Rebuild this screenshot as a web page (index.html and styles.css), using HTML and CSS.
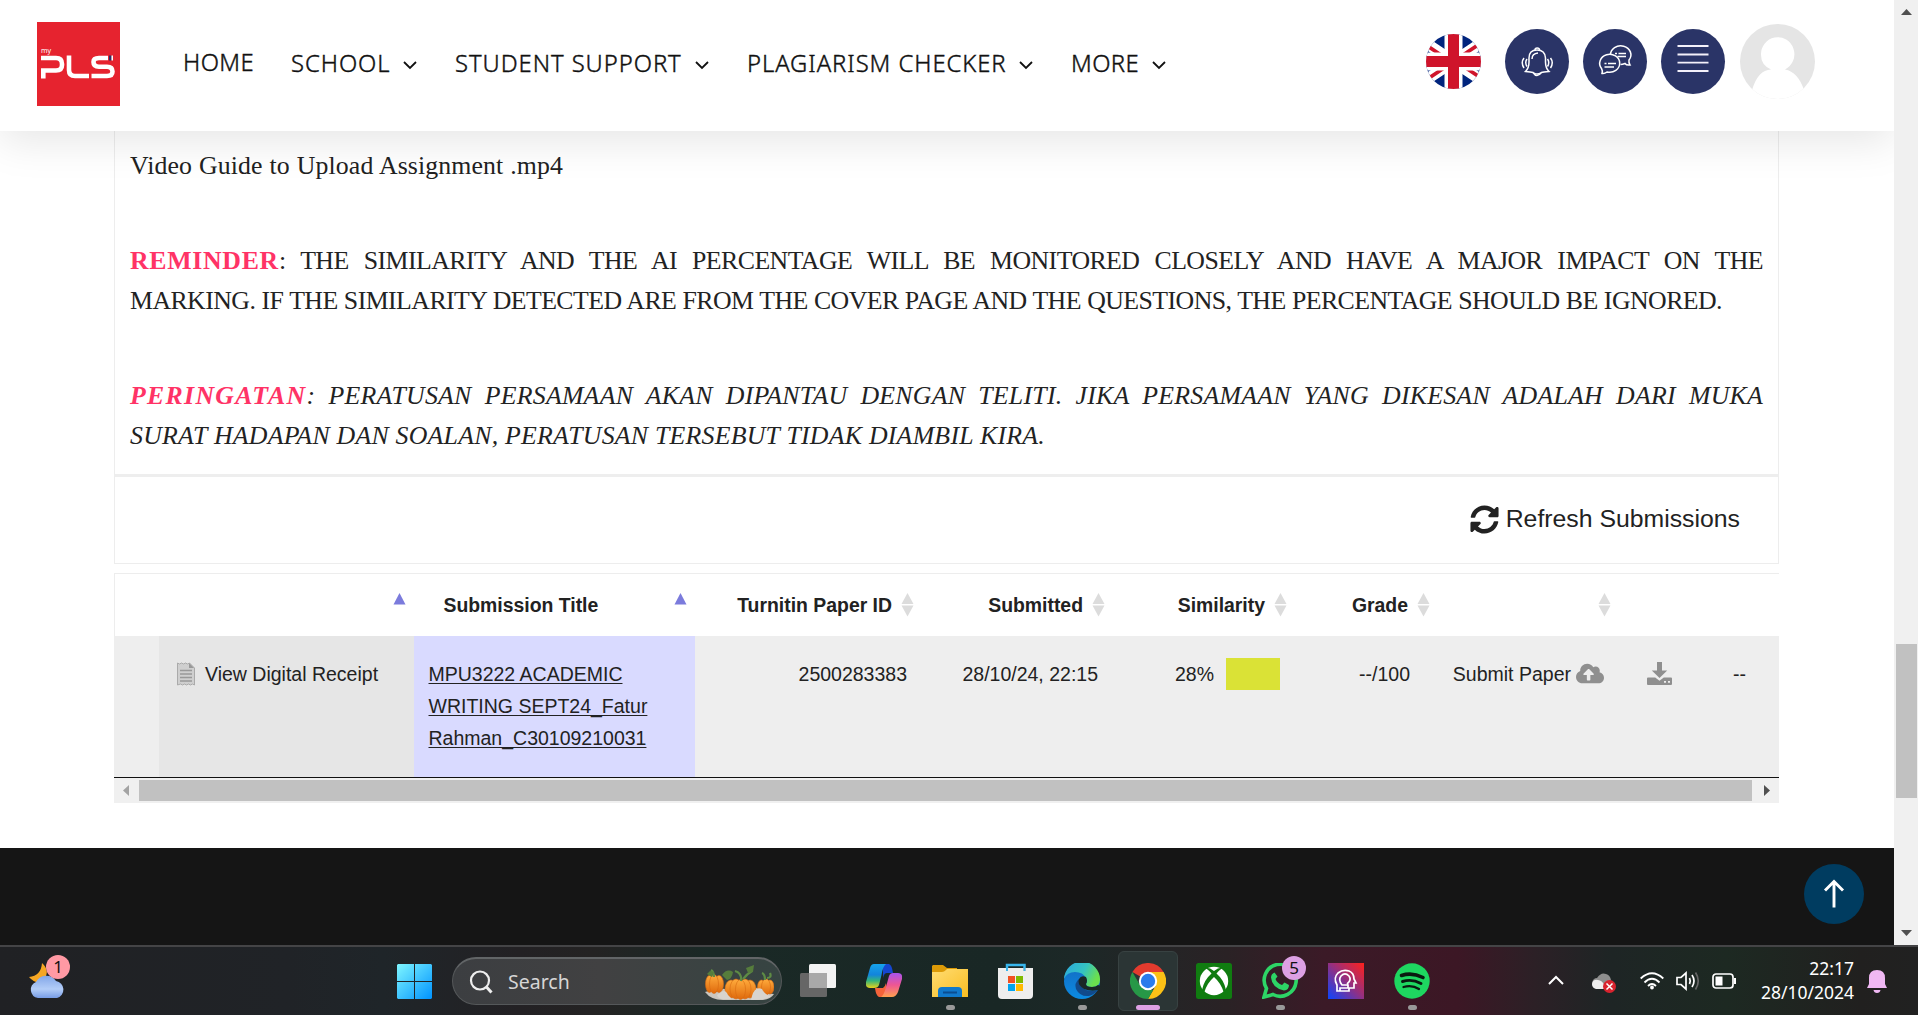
FILE: index.html
```html
<!DOCTYPE html>
<html lang="en">
<head>
<meta charset="utf-8">
<title>myPLS - Submissions</title>
<link rel="stylesheet" href="styles.css">
</head>
<body>
<div class="browser">
  <div class="page">
    <header class="topbar">
      <svg class="logo" width="83" height="84" viewBox="0 0 83 84">
        <rect width="83" height="84" fill="#e6232f"/>
        <text x="4" y="31" class="logo-my">my</text>
        <g fill="none" stroke="#fff" stroke-width="4.6">
          <path d="M4 36H19Q25 36 25 42V43Q25 48.500 19 48.500H6.300V56.500"/>
          <path d="M32 33.500V48Q32 54 38 54H52"/>
          <path d="M71 36H62Q56.500 36 56.500 40Q56.500 44.700 62 44.700H70Q75.500 44.700 75.500 49.500Q75.500 54 70 54H54.500"/>
        </g>
        <path d="M72 33.500h2.500v5H72z" fill="#27306b"/><path d="M74.500 33.500H76v5h-1.500z" fill="#fff"/>
      </svg>
      <nav class="menu">
        <a class="m-home">HOME</a>
        <a class="m-school">SCHOOL<svg width="14" height="9" viewBox="0 0 14 9"><path d="M1 1l6 6 6-6"/></svg></a>
        <a class="m-support">STUDENT SUPPORT<svg width="14" height="9" viewBox="0 0 14 9"><path d="M1 1l6 6 6-6"/></svg></a>
        <a class="m-check">PLAGIARISM CHECKER<svg width="14" height="9" viewBox="0 0 14 9"><path d="M1 1l6 6 6-6"/></svg></a>
        <a class="m-more">MORE<svg width="14" height="9" viewBox="0 0 14 9"><path d="M1 1l6 6 6-6"/></svg></a>
      </nav>
      <div class="actions">
        <svg class="flag" width="55" height="55" viewBox="0 0 55 55">
          <defs><clipPath id="round"><circle cx="27.500" cy="27.500" r="27.500"/></clipPath></defs>
          <g clip-path="url(#round)">
            <rect width="55" height="55" fill="#00247d"/>
            <path d="M-9 3L64 52M64 3L-9 52" stroke="#fff" stroke-width="11"/>
            <path d="M-9 5L27 29M64 3L28 27M-9 52L27 28M64 50L28 26" stroke="#cf142b" stroke-width="3.600"/>
            <path d="M27.500 0V55M0 27.500H55" stroke="#fff" stroke-width="18"/>
            <path d="M27.500 0V55M0 27.500H55" stroke="#cf142b" stroke-width="11"/>
          </g>
        </svg>
        <div class="round"><svg width="64" height="65" viewBox="0 0 64 65"><g fill="none" stroke="#fff" stroke-width="1.500">
          <path d="M20.500 42.500Q24 39 24 33V29Q24 21 32 21T40.500 29V33Q40.500 39 44 42.500Q38 43 36.500 43.500Q34 46.500 32 46.500Q30 46.500 28 43.500Q26 43 20.500 42.500z"/>
          <path d="M30 21Q30 19 32.200 19T34.500 21M27 30Q27 24.500 33 24"/><path d="M29 44Q32 46 36 44"/>
          <path d="M22 30Q19.500 33.500 22 37.500M19 29Q15.500 33.500 19 39M42.500 30Q45 33.500 42.500 37.500M45.500 29Q49 33.500 45.500 39"/></g></svg></div>
        <div class="round"><svg width="64" height="65" viewBox="0 0 64 65"><g fill="none" stroke="#fff" stroke-width="1.500">
          <path d="M19 44.500Q20 42 18.500 39.500A10 9 0 1 1 24 43Q21.500 45 19 44.500z"/>
          <path d="M27.500 26A10.200 9 0 1 1 46 31Q45.500 34 47 36Q43.500 36.500 42 34.500Q39.500 35.500 37.500 35.500"/>
          <path d="M32 24.500H34M35.500 24.500H43M34.500 27.500H43M21.500 34.500H23.500M25 34.500H33M21.500 38H31"/></g></svg></div>
        <div class="round"><svg width="64" height="65" viewBox="0 0 64 65"><path d="M16.500 17H47.500M16.500 25.500H47.500M16.500 33.700H47.500M16.500 42H47.500" stroke="#f3f0fa" stroke-width="1.800"/></svg></div>
        <svg class="avatar" width="75" height="75" viewBox="0 0 75 75"><defs><clipPath id="av"><circle cx="37.500" cy="37.500" r="37.500"/></clipPath></defs>
          <g clip-path="url(#av)"><rect width="75" height="75" fill="#e5e5e5"/><path d="M8 76L12 66Q18 46 31 45.500Q21 41 21 31A16.700 17 0 1 1 45 45.500Q58 48 64 66L68 76z" fill="#fff"/></g></svg>
      </div>
    </header>

    <main class="content">
      <section class="notes">
        <p><span class="line w-video">Video Guide to Upload Assignment .mp4</span></p>
        <p class="reminder"><span class="line"><b>REMINDER</b>: THE SIMILARITY AND THE AI PERCENTAGE WILL BE MONITORED CLOSELY AND HAVE A MAJOR IMPACT ON THE</span>
        <span class="line w-marking">MARKING. IF THE SIMILARITY DETECTED ARE FROM THE COVER PAGE AND THE QUESTIONS, THE PERCENTAGE SHOULD BE IGNORED.</span></p>
        <p class="peringatan"><span class="line"><b>PERINGATAN</b>: PERATUSAN PERSAMAAN AKAN DIPANTAU DENGAN TELITI. JIKA PERSAMAAN YANG DIKESAN ADALAH DARI MUKA</span>
        <span class="line w-surat">SURAT HADAPAN DAN SOALAN, PERATUSAN TERSEBUT TIDAK DIAMBIL KIRA.</span></p>
      </section>
      <section class="refresh">
        <svg width="29" height="29" viewBox="0 0 512 512"><path fill="#222" d="M370.700 133.300C339.500 104 298.900 88 255.800 88c-77.500.1-144.300 53.200-162.800 126.900-1.300 5.400-6.100 9.100-11.700 9.100H24.100c-7.500 0-13.200-6.800-11.800-14.200C33.900 94.900 134.800 8 256 8c66.400 0 126.800 26.100 171.300 68.700L463 41c15.100-15.100 41-4.400 41 17v134c0 13.300-10.700 24-24 24H346c-21.400 0-32.100-25.900-17-41l41.700-41.700zM32 296h134c21.400 0 32.100 25.900 17 41l-41.800 41.800c31.300 29.300 71.800 45.300 115 45.300 77.400-.1 144.300-53.100 162.800-126.900 1.300-5.400 6.100-9.100 11.700-9.100h57.300c7.500 0 13.200 6.800 11.800 14.200C478.100 417.100 377.200 504 256 504c-66.400 0-126.800-26.100-171.300-68.700L49 471c-15.100 15.100-41 4.400-41-17V320c0-13.300 10.700-24 24-24z"/></svg>
        <span>Refresh Submissions</span>
      </section>

      <section class="table">
        <div class="row head">
          <div></div>
          <div class="end p8"><svg class="sort asc" width="13" height="24" viewBox="0 0 13 24"><path d="M6.500 0l6 11.500H.5z"/></svg></div>
          <div class="between"><span>Submission Title</span><svg class="sort asc" width="13" height="24" viewBox="0 0 13 24"><path d="M6.500 0l6 11.500H.5z"/></svg></div>
          <div class="end p8">Turnitin Paper ID<svg class="sort" width="13" height="24" viewBox="0 0 13 24"><path d="M6.500 0l6 11H.5zM.5 12.500h12L6.500 23.500z"/></svg></div>
          <div class="end p8">Submitted<svg class="sort" width="13" height="24" viewBox="0 0 13 24"><path d="M6.500 0l6 11H.5zM.5 12.500h12L6.500 23.500z"/></svg></div>
          <div class="end p8">Similarity<svg class="sort" width="13" height="24" viewBox="0 0 13 24"><path d="M6.500 0l6 11H.5zM.5 12.500h12L6.500 23.500z"/></svg></div>
          <div class="end p8">Grade<svg class="sort" width="13" height="24" viewBox="0 0 13 24"><path d="M6.500 0l6 11H.5zM.5 12.500h12L6.500 23.500z"/></svg></div>
          <div class="end p8"><svg class="sort" width="13" height="24" viewBox="0 0 13 24"><path d="M6.500 0l6 11H.5zM.5 12.500h12L6.500 23.500z"/></svg></div>
          <div></div><div></div>
        </div>
        <div class="row data">
          <div></div>
          <div class="receipt"><svg width="18" height="24" viewBox="0 0 18 24"><path d="M.5 1l2 1 2-1 2 1 2-1 2 1 2-1 5 5V23l-2-1-2 1-2-1-2 1-2-1-2 1-2-1-3 1z" fill="#cfcfcf" stroke="#aaa"/><path d="M12 1v5h5z" fill="#999"/><path d="M3 8.500H15M3 12H15M3 15.500H15M3 19H15" stroke="#999" stroke-width="1.400"/></svg><span>View Digital Receipt</span></div>
          <div class="title"><a>MPU3222 ACADEMIC<br>WRITING SEPT24_Fatur<br>Rahman_C30109210031</a></div>
          <div class="end p15">2500283383</div>
          <div class="end p15">28/10/24, 22:15</div>
          <div class="end p15">28%<i class="swatch"></i></div>
          <div class="end p28">--/100</div>
          <div class="end p15">Submit Paper<svg class="cloud" width="28" height="21" viewBox="0 32 640 448"><path fill="#8f8f8f" fill-rule="evenodd" d="M537.600 226.600c4.100-10.700 6.400-22.400 6.400-34.600 0-53-43-96-96-96-19.700 0-38.100 6-53.300 16.200C367 64.200 315.300 32 256 32c-88.400 0-160 71.600-160 160 0 2.700.1 5.400.2 8.100C40.200 219.800 0 273.200 0 336c0 79.500 64.500 144 144 144h368c70.700 0 128-57.300 128-128 0-61.900-44-113.600-102.400-125.400zM393.400 288H328v112c0 8.800-7.200 16-16 16h-48c-8.800 0-16-7.200-16-16V288h-65.400c-14.300 0-21.400-17.200-11.300-27.300l105.400-105.400c6.200-6.200 16.400-6.200 22.600 0l105.400 105.400c10.100 10.100 2.900 27.300-11.300 27.300z"/></svg></div>
          <div class="end p28"><svg class="dl" width="25" height="23" viewBox="0 0 25 23"><path fill="#8f8f8f" d="M10 0h5v8.500h5.200L12.500 16 4.800 8.500H10z"/><path fill="#8f8f8f" fill-rule="evenodd" d="M1 15.500h7.200l4.300 3.300 4.300-3.300H24q1 0 1 1V22q0 1-1 1H1q-1 0-1-1v-5.500q0-1 1-1zM17 19v1.800h2V19zM21 19v1.800h2V19z"/></svg></div>
          <div class="end p33">--</div>
        </div>
        <div class="hscroll"><svg width="25" height="25" viewBox="0 0 25 25"><path d="M15 7v11l-6-5.500z" fill="#a3a3a3"/></svg><div class="thumb"></div><svg width="27" height="25" viewBox="0 0 27 25"><path d="M12 7v11l6-5.500z" fill="#505050"/></svg></div>
      </section>
    </main>
    <footer class="footer"><div class="totop"><svg width="60" height="60" viewBox="0 0 60 60"><path d="M30 43.500V18M21 26.500l9-9 9 9" fill="none" stroke="#fff" stroke-width="2.900"/></svg></div></footer>
  </div>
  <div class="vscroll"><svg width="24" height="24" viewBox="0 0 24 24"><path d="M7 15h11l-5.500-6z" fill="#505050"/></svg><div class="thumb"></div><svg width="24" height="24" viewBox="0 0 24 24"><path d="M7 9h11l-5.500 6z" fill="#505050"/></svg></div>
</div>

<div class="taskbar">
  <div class="weather"><svg width="37" height="36" viewBox="0 0 37 36"><defs><linearGradient id="cl" x2="0" y2="1"><stop offset="0" stop-color="#82a6e8"/><stop offset=".6" stop-color="#b3cdf8"/><stop offset="1" stop-color="#779ce6"/></linearGradient></defs><path d="M13 0Q22 8 14 18Q7 22 0 14Q12 13 13 0z" fill="#f5a623"/><path d="M9 35A9 8.500 0 0 1 7 19A11.500 11.500 0 0 1 27 18A8.700 8.700 0 0 1 28 35z" fill="url(#cl)"/></svg><span class="badge pink">1</span></div>
  <div class="apps">
    <svg class="win" width="35" height="35" viewBox="0 0 35 35"><defs><linearGradient id="wg" x2="1" y2="1"><stop offset="0" stop-color="#7ff6ff"/><stop offset="1" stop-color="#0093ff"/></linearGradient></defs><path d="M1 0H17V17H0V1zM18 0H34L35 1V17H18zM0 18H17V35H1L0 34zM18 18H35V34L34 35H18z" fill="url(#wg)"/></svg>
    <div class="search"><svg width="24" height="24" viewBox="0 0 24 24" fill="none" stroke="#eee" stroke-width="2.200"><circle cx="11" cy="10.500" r="9"/><path d="M17.500 17l5 5.500" stroke-width="3"/></svg><span>Search</span>
      <svg class="pumpkins" width="69" height="36" viewBox="0 0 69 36"><defs><linearGradient id="pk" x2="0" y2="1"><stop offset="0" stop-color="#ffac3d"/><stop offset="1" stop-color="#df690c"/></linearGradient></defs>
        <path d="M0 27Q8 24 11 27Q20 20 24 28Q40 33 48 24Q56 20 60 28L69 29Q66 34 58 35H18Q6 35 0 27z" fill="#cbc6bf"/>
        <g fill="url(#pk)" stroke="#d66a10" stroke-width=".6"><ellipse cx="4.500" cy="19" rx="4" ry="8.500"/><ellipse cx="14" cy="19" rx="4.500" ry="8.500"/><ellipse cx="9" cy="19" rx="4.500" ry="9.500"/><ellipse cx="56.500" cy="22" rx="4" ry="7"/><ellipse cx="65" cy="22" rx="4" ry="7"/><ellipse cx="61" cy="22" rx="4.500" ry="8"/><ellipse cx="26" cy="24" rx="6" ry="9"/><ellipse cx="45" cy="24" rx="6" ry="9"/><ellipse cx="31" cy="24" rx="6" ry="10"/><ellipse cx="40" cy="24" rx="6" ry="10"/><ellipse cx="35.500" cy="24.500" rx="5" ry="10"/></g>
        <path d="M15 28Q20 23 23 30L27 34H18Q13 34 12 30zM47 31Q50 21 57 24Q60 30 66 31Q62 35 46 35z" fill="#d8d4ce"/>
        <g fill="none" stroke="#5e8b45" stroke-width="2.200"><path d="M36 16Q37 8 30 6M38 14Q42 9 47 6M9 12Q9 7 6 5M60 15Q60 9 57 8M62 13Q67 13 65 8"/></g><path d="M17 10Q22 3 28 7Q27 14 22 15zM41 3l8-3-1 7-5 1zM2 9l3-3 4 1-2 5z" fill="#567d3c"/></svg></div>
    <div class="app"><svg width="36" height="36" viewBox="0 0 36 36"><rect y="10" width="27" height="24" rx="1.500" fill="#666"/><rect x="9" y="1" width="27" height="24" rx="1.500" fill="#f3f3f3"/><path d="M9 10h18v15H9z" fill="#a9a9a9"/></svg></div>
    <div class="app"><svg width="36" height="36" viewBox="0 0 36 36"><defs><linearGradient id="c1" x2="0" y2="1"><stop offset="0" stop-color="#16a4ec"/><stop offset=".45" stop-color="#1284dc"/><stop offset=".7" stop-color="#35b57a"/><stop offset="1" stop-color="#e9d31a"/></linearGradient><linearGradient id="c2" x2="0" y2="1"><stop offset="0" stop-color="#a953ef"/><stop offset=".5" stop-color="#ee5693"/><stop offset="1" stop-color="#ffa04f"/></linearGradient></defs><path d="M17 1H23Q26 2 27 10H21Q18 10 17 15z" fill="#1546cf"/><path d="M9 25h8q2-1 3-5l1 8-4 6h-4q-3-1-4-9z" fill="#f4633a"/><path d="M8 1H20Q17 3 15.500 12L13 22Q12 25 8 25H4Q-1 25 0 19L4 5Q5 1 8 1z" fill="url(#c1)"/><path d="M27 10H32Q37 10 36 16L32 29Q30 34 26 34H15Q18 32 20 24L23 13Q24 10 27 10z" fill="url(#c2)"/></svg></div>
    <div class="app"><svg width="36" height="36" viewBox="0 0 36 36"><defs><linearGradient id="fo" x2="1" y2="1"><stop offset="0" stop-color="#ffdc72"/><stop offset="1" stop-color="#f9bd22"/></linearGradient></defs><path d="M1 2H11L15 5H25V14H0V3z" fill="#dc9a07"/><path d="M0 9H10Q12 9 14 7L15 6H36V34H0z" fill="url(#fo)"/><path d="M6 34V28Q6 24 10 24H26Q30 24 30 28V34z" fill="#1179cb"/><path d="M11 29.500H25" stroke="#0a4d90" stroke-width="2"/></svg><u></u></div>
    <div class="app"><svg width="36" height="36" viewBox="0 0 36 36"><path d="M9 8V2H26.500V8" fill="none" stroke="#38b6ed" stroke-width="2.500"/><path d="M0 5H8V8H10V5H25.500V8H27.500V5H35V32Q35 36 31 36H4Q0 36 0 32z" fill="#eee"/><path d="M10 13h7v7h-7z" fill="#f25022"/><path d="M18 13h7v7h-7z" fill="#7fba00"/><path d="M10 21h7v7h-7z" fill="#00a4ef"/><path d="M18 21h7v7h-7z" fill="#ffb900"/></svg></div>
    <div class="app"><svg width="36" height="36" viewBox="0 0 36 36"><defs><linearGradient id="e1" x2="1" y2=".4"><stop offset="0" stop-color="#2aa7e0"/><stop offset=".6" stop-color="#35c3c0"/><stop offset="1" stop-color="#6be04e"/></linearGradient><linearGradient id="e2" x2="0" y2="1"><stop offset="0" stop-color="#146ac0"/><stop offset="1" stop-color="#0b8be2"/></linearGradient></defs><circle cx="18" cy="18" r="18" fill="url(#e2)"/><path d="M0 16A18 18 0 0 1 36 17Q36 24 28 24Q22 24 22 21Q24 18 22 15Q19 9 11 9Q3 9 0 16z" fill="url(#e1)"/><path d="M15 16Q10 20 12 26Q16 34 25 33Q31 31 34 27Q28 29 22 27Q15 24 15 16z" fill="#114a8b"/><path d="M22 14Q17 12 15 16Q13 22 20 26Q27 29 34 27L37 29V23L34 22Q32 24 28 24Q22 24 22 21Q24 18 22 14z" fill="#1a2726"/></svg><u></u></div>
    <div class="app active"><svg width="36" height="36" viewBox="0 0 36 36"><path d="M18 18L2.400 9A18 18 0 0 1 33.600 9z" fill="#e33b2e"/><path d="M18 18V9H33.600A18 18 0 0 1 18 36L25.800 22.500z" fill="#fbc116"/><path d="M2.400 9L10.200 22.500L18 27H23.200L18 36A18 18 0 0 1 2.400 9z" fill="#279847"/><circle cx="18" cy="18" r="9.200" fill="#fff"/><circle cx="18" cy="18" r="7.200" fill="#2b7bec"/></svg><u></u></div>
    <div class="app"><svg width="36" height="36" viewBox="0 0 36 36"><rect width="36" height="36" rx="2.500" fill="#107c10"/><circle cx="18" cy="18" r="14.200" fill="#fff"/><path d="M9 5Q13 4 18 8Q23 4 27 5Q24 6 20.500 10.500Q28 17 30 27L28 30Q25 20 18 14Q11 20 8 30L6 27Q8 17 15.500 10.500Q12 6 9 5z" fill="#107c10"/></svg></div>
    <div class="app"><svg width="36" height="36" viewBox="0 0 36 36"><path d="M2 34L4.500 25.500A16 16 0 1 1 11 31.500z" fill="none" stroke="#2dd566" stroke-width="3.600"/><path d="M12.500 9.500Q9 11 9 14.500Q10 25 22 27.500Q27 27 27 22L22.500 19.500L20 22Q15 20 13.500 16L15.500 13.500z" fill="#2dd566"/></svg><span class="badge lilac">5</span><u></u></div>
    <div class="app"><svg width="36" height="36" viewBox="0 0 36 36"><defs><linearGradient id="hd" x1="0" y1="1" x2="1" y2="0"><stop offset="0" stop-color="#0b45ff"/><stop offset=".5" stop-color="#913083"/><stop offset="1" stop-color="#ff211b"/></linearGradient></defs><rect width="36" height="36" fill="url(#hd)"/><path d="M9 28V22Q5 15 10 10Q15 6 21 8Q26 10 26 16L28 20H26V25H21V28z" fill="none" stroke="#fff" stroke-width="1.700"/><path d="M12 28V25H20V22H14Q10 17 13 13Q17 9 21 13Q24 17 19 21" fill="none" stroke="#fff" stroke-width="1.700"/></svg></div>
    <div class="app"><svg width="36" height="36" viewBox="0 0 36 36"><circle cx="18" cy="18" r="17.700" fill="#1ed760"/><g fill="none" stroke="#0a1a10" stroke-linecap="round"><path d="M7.500 12.500Q18 9 29 14.500" stroke-width="3.600"/><path d="M8.500 18.500Q18 15.500 27 20.500" stroke-width="2.900"/><path d="M9.500 24Q18 21.500 25 26" stroke-width="2.300"/></g></svg><u></u></div>
  </div>
  <div class="tray">
    <svg width="16" height="10" viewBox="0 0 16 10"><path d="M1 9l7-7 7 7" fill="none" stroke="#fff" stroke-width="2"/></svg>
    <svg class="t-cloud" width="24" height="21" viewBox="0 0 24 21"><path d="M4 15Q0 14 0 10Q1 5 5 5Q9-1 14 1Q18 2 19 7L12 15z" fill="#8e8e8e"/><path d="M4 16Q0 15 0 11Q1 6 6 7Q10 7 13 13V16z" fill="#eee"/><circle cx="17.500" cy="13.500" r="6.500" fill="#d9232e"/><path d="M14.500 10.500l6 6m0-6l-6 6" stroke="#fff" stroke-width="1.500"/></svg>
    <svg class="t-wifi" width="24" height="18" viewBox="0 0 24 18" fill="none" stroke="#fff" stroke-width="1.800"><path d="M.7 6.500Q12-4 23.300 6.500M4.500 10.500Q12 3 19.500 10.500M8 14Q12 10 16 14"/><circle cx="12" cy="15.500" r="1" /></svg>
    <svg class="t-snd" width="24" height="20" viewBox="0 0 24 20" fill="none" stroke="#fff" stroke-width="1.700"><path d="M1 6.500H5L10 2V18L5 13.500H1zM13.500 7Q15 10 13.500 13M16 4Q20 10 16 16"/><path d="M19.500 1.500Q25 10 19.500 18.500" stroke="#666"/></svg>
    <svg class="t-bat" width="24" height="16" viewBox="0 0 24 16"><rect x="1" y="1" width="20" height="14" rx="3" fill="none" stroke="#fff" stroke-width="1.700"/><path d="M3.500 3.500h7v9h-7zM22 5h2v6h-2z" fill="#fff"/></svg>
    <div class="clock">22:17<br>28/10/2024</div>
    <svg class="t-bell" width="20" height="24" viewBox="0 0 20 24"><path d="M0 18L2 14V8Q2 0 10 0T18 8V14L20 18zM6.500 20H13.500Q13 23 10 23T6.500 20z" fill="#f0b8f3"/></svg>
  </div>
</div>
</body>
</html>
```
FILE: styles.css
```css
* { box-sizing: border-box; }
body { margin: 0; width: 1918px; height: 1015px; overflow: hidden; background: #fff; color: #222; font-family: "Liberation Sans", Arial, sans-serif; }
svg { display: block; flex: none; }
.browser { display: flex; height: 945px; }
.page { width: 1894px; display: flex; flex-direction: column; overflow: hidden; }

.topbar { position: relative; z-index: 1; height: 131px; flex: none; background: #fff; display: flex; padding-left: 37px; box-shadow: 0 10px 40px rgba(0, 0, 0, .1); }
.logo { margin-top: 22px; }
.logo-my { font: 7px "Noto Sans", sans-serif; fill: #fff; }
.menu { display: flex; width: 1246px; padding: 45px 0 0 63px; font: 300 23.8px/34px "Noto Sans", sans-serif; color: #111; -webkit-text-stroke: .4px #111; white-space: nowrap; letter-spacing: .95px; }
.menu a { display: flex; justify-content: space-between; align-items: flex-start; padding-top: 1px; }
.menu a svg { margin-top: 15px; fill: none; stroke: #111; stroke-width: 1.8; }
.menu .m-home { width: 72px; margin-right: 36px; padding-top: 0; letter-spacing: .4px; }
.m-school { width: 126px; margin-right: 38px; }
.m-support { width: 254px; margin-right: 38px; }
.m-check { width: 286px; margin-right: 38px; }
.menu .m-more { width: 95px; letter-spacing: .4px; }
.actions { display: flex; margin-left: 60px; }
.flag { margin: 34px 24px 0 0; }
.round { width: 64px; height: 65px; border-radius: 50%; background: #2a3467; margin: 29px 14px 0 0; }
.avatar { margin: 24px 0 0 1px; }

.content { height: 717px; padding: 0 115px 0 114px; flex: none; }
.notes { height: 346px; border: 1px solid #ededed; border-top: 0; border-bottom: 3px solid #eee; padding: 15px 15px 0; font: 25.8px/40px "Liberation Serif", serif; }
.notes p { margin: 0 0 55px; }
.notes .line { display: block; white-space: nowrap; text-align-last: justify; }
.notes b { color: #ff3366; }
.reminder { letter-spacing: -.55px; }
.reminder b { letter-spacing: .7px; }
.peringatan { font-style: italic; letter-spacing: .25px; }
.peringatan b { letter-spacing: 1.3px; }
.notes .w-video { width: 433px; letter-spacing: .1px; }
.notes .w-marking { width: 1592px; }
.notes .w-surat { width: 915px; }
.refresh { height: 87px; border: 1px solid #ededed; border-top: 0; display: flex; justify-content: flex-end; align-items: center; gap: 7px; padding: 0 38px 2px 0; font-size: 24.8px; }

.table { margin-top: 9px; font-size: 19.5px; line-height: 32px; }
.row { display: grid; grid-template-columns: 45px 255px 281px 227px 191px 182px 143px 181px 81px 79px; white-space: nowrap; }
.head { height: 63px; border-top: 1px solid #ededed; box-shadow: inset 1px 0 #ededed; font-weight: bold; font-size: 19.4px; }
.head > div { display: flex; padding-top: 15px; }
.head .end, .data .end { justify-content: flex-end; }
.between { justify-content: space-between; padding: 0 8px 0 29.5px; }
.sort { margin: 4px 0 0 9px; fill: #dcdcdc; }
.sort.asc { fill: #7b7bdc; }
.p8 { padding-right: 8px; }
.data { height: 142px; background: #eee; border-bottom: 1px solid #111; }
.data > div { display: flex; padding-top: 22px; }
.data .receipt { background: #e6e6e6; padding-left: 18px; gap: 10px; }
.receipt svg { margin-top: 4px; }
.data .title { background: #d9daff; padding-left: 14.5px; }
.title a { text-decoration: underline; text-underline-offset: 2px; text-decoration-thickness: 1px; }
.p15 { padding-right: 15px; }
.p28 { padding-right: 28px; }
.p33 { padding-right: 33px; }
.swatch { width: 54px; height: 32px; margin-left: 12px; background: #dae236; }
.cloud { margin: 5px 0 0 5px; }
.dl { margin-top: 4px; }
.hscroll { display: flex; height: 25px; background: #f0f0f0; }
.hscroll .thumb { flex: 1; margin: 2px 0; background: #c1c1c1; }

.footer { flex: 1; background: #151515; display: flex; justify-content: flex-end; padding: 16px 30px 0 0; }
.totop { width: 60px; height: 60px; border-radius: 50%; background: #003c60; }
.vscroll { width: 24px; background: #f0f0f0; display: flex; flex-direction: column; }
.vscroll .thumb { height: 154px; margin: 620px 1px 123px 2px; background: #c1c1c1; }

.taskbar { height: 70px; border-top: 2px solid #444446; display: flex; background: linear-gradient(90deg, #202124 0, #202327 15%, #1f2529 20%, #232124 27%, #242323 31%, #1a2926 37%, #192725 52%, #1c2827 56%, #2a2225 64%, #3b1a27 69%, #3c1725 76%, #2c2026 80%, #1e2525 84%, #1d2922 90%, #21201f 97%, #212121); color: #fff; font-family: "Noto Sans", sans-serif; }
.weather { position: relative; width: 397px; padding: 16px 0 0 29px; }
.badge { position: absolute; width: 24px; height: 24px; border-radius: 50%; color: #111; font-size: 17px; line-height: 24px; text-align: center; }
.pink { left: 46px; top: 8px; background: #ff99a4; }
.lilac { left: 32px; top: 5px; background: #dda0e4; }
.apps { display: flex; width: 1151px; }
.win { margin: 17px 20px 0 0; }
.search { width: 330px; height: 48px; margin: 10px 3px 0 0; border: 1px solid #55585a; border-top: 2px solid #626567; border-radius: 24px; background: linear-gradient(90deg, #3c3e41, #414142 45%, #364442); display: flex; align-items: center; padding: 0 7px 0 16px; font-size: 19.5px; color: #d6d6d6; }
.search span { margin: 0 auto 0 15px; }
.pumpkins { margin-top: 3px; }
.app { position: relative; width: 60px; height: 60px; margin: 4px 3px 0; padding: 12px; border-radius: 6px; }
.app u { position: absolute; left: 26px; bottom: 1px; width: 9px; height: 5px; border-radius: 3px; background: #999; }
.active { background: #2b3535; border: 1px solid #384242; padding: 11px; }
.active u { left: 17px; bottom: 0; width: 24px; background: #dda0e4; }
.tray { display: flex; align-items: flex-start; }
.tray > svg:first-child { margin-top: 28px; }
.t-cloud { margin: 26px 0 0 28px; }
.t-wifi { margin: 25px 0 0 24px; }
.t-snd { margin: 24px 0 0 12px; }
.t-bat { margin: 26px 0 0 12px; }
.clock { width: 118px; padding-top: 9px; text-align: right; font-size: 17.5px; line-height: 24px; }
.t-bell { margin: 23px 0 0 13px; }
```
